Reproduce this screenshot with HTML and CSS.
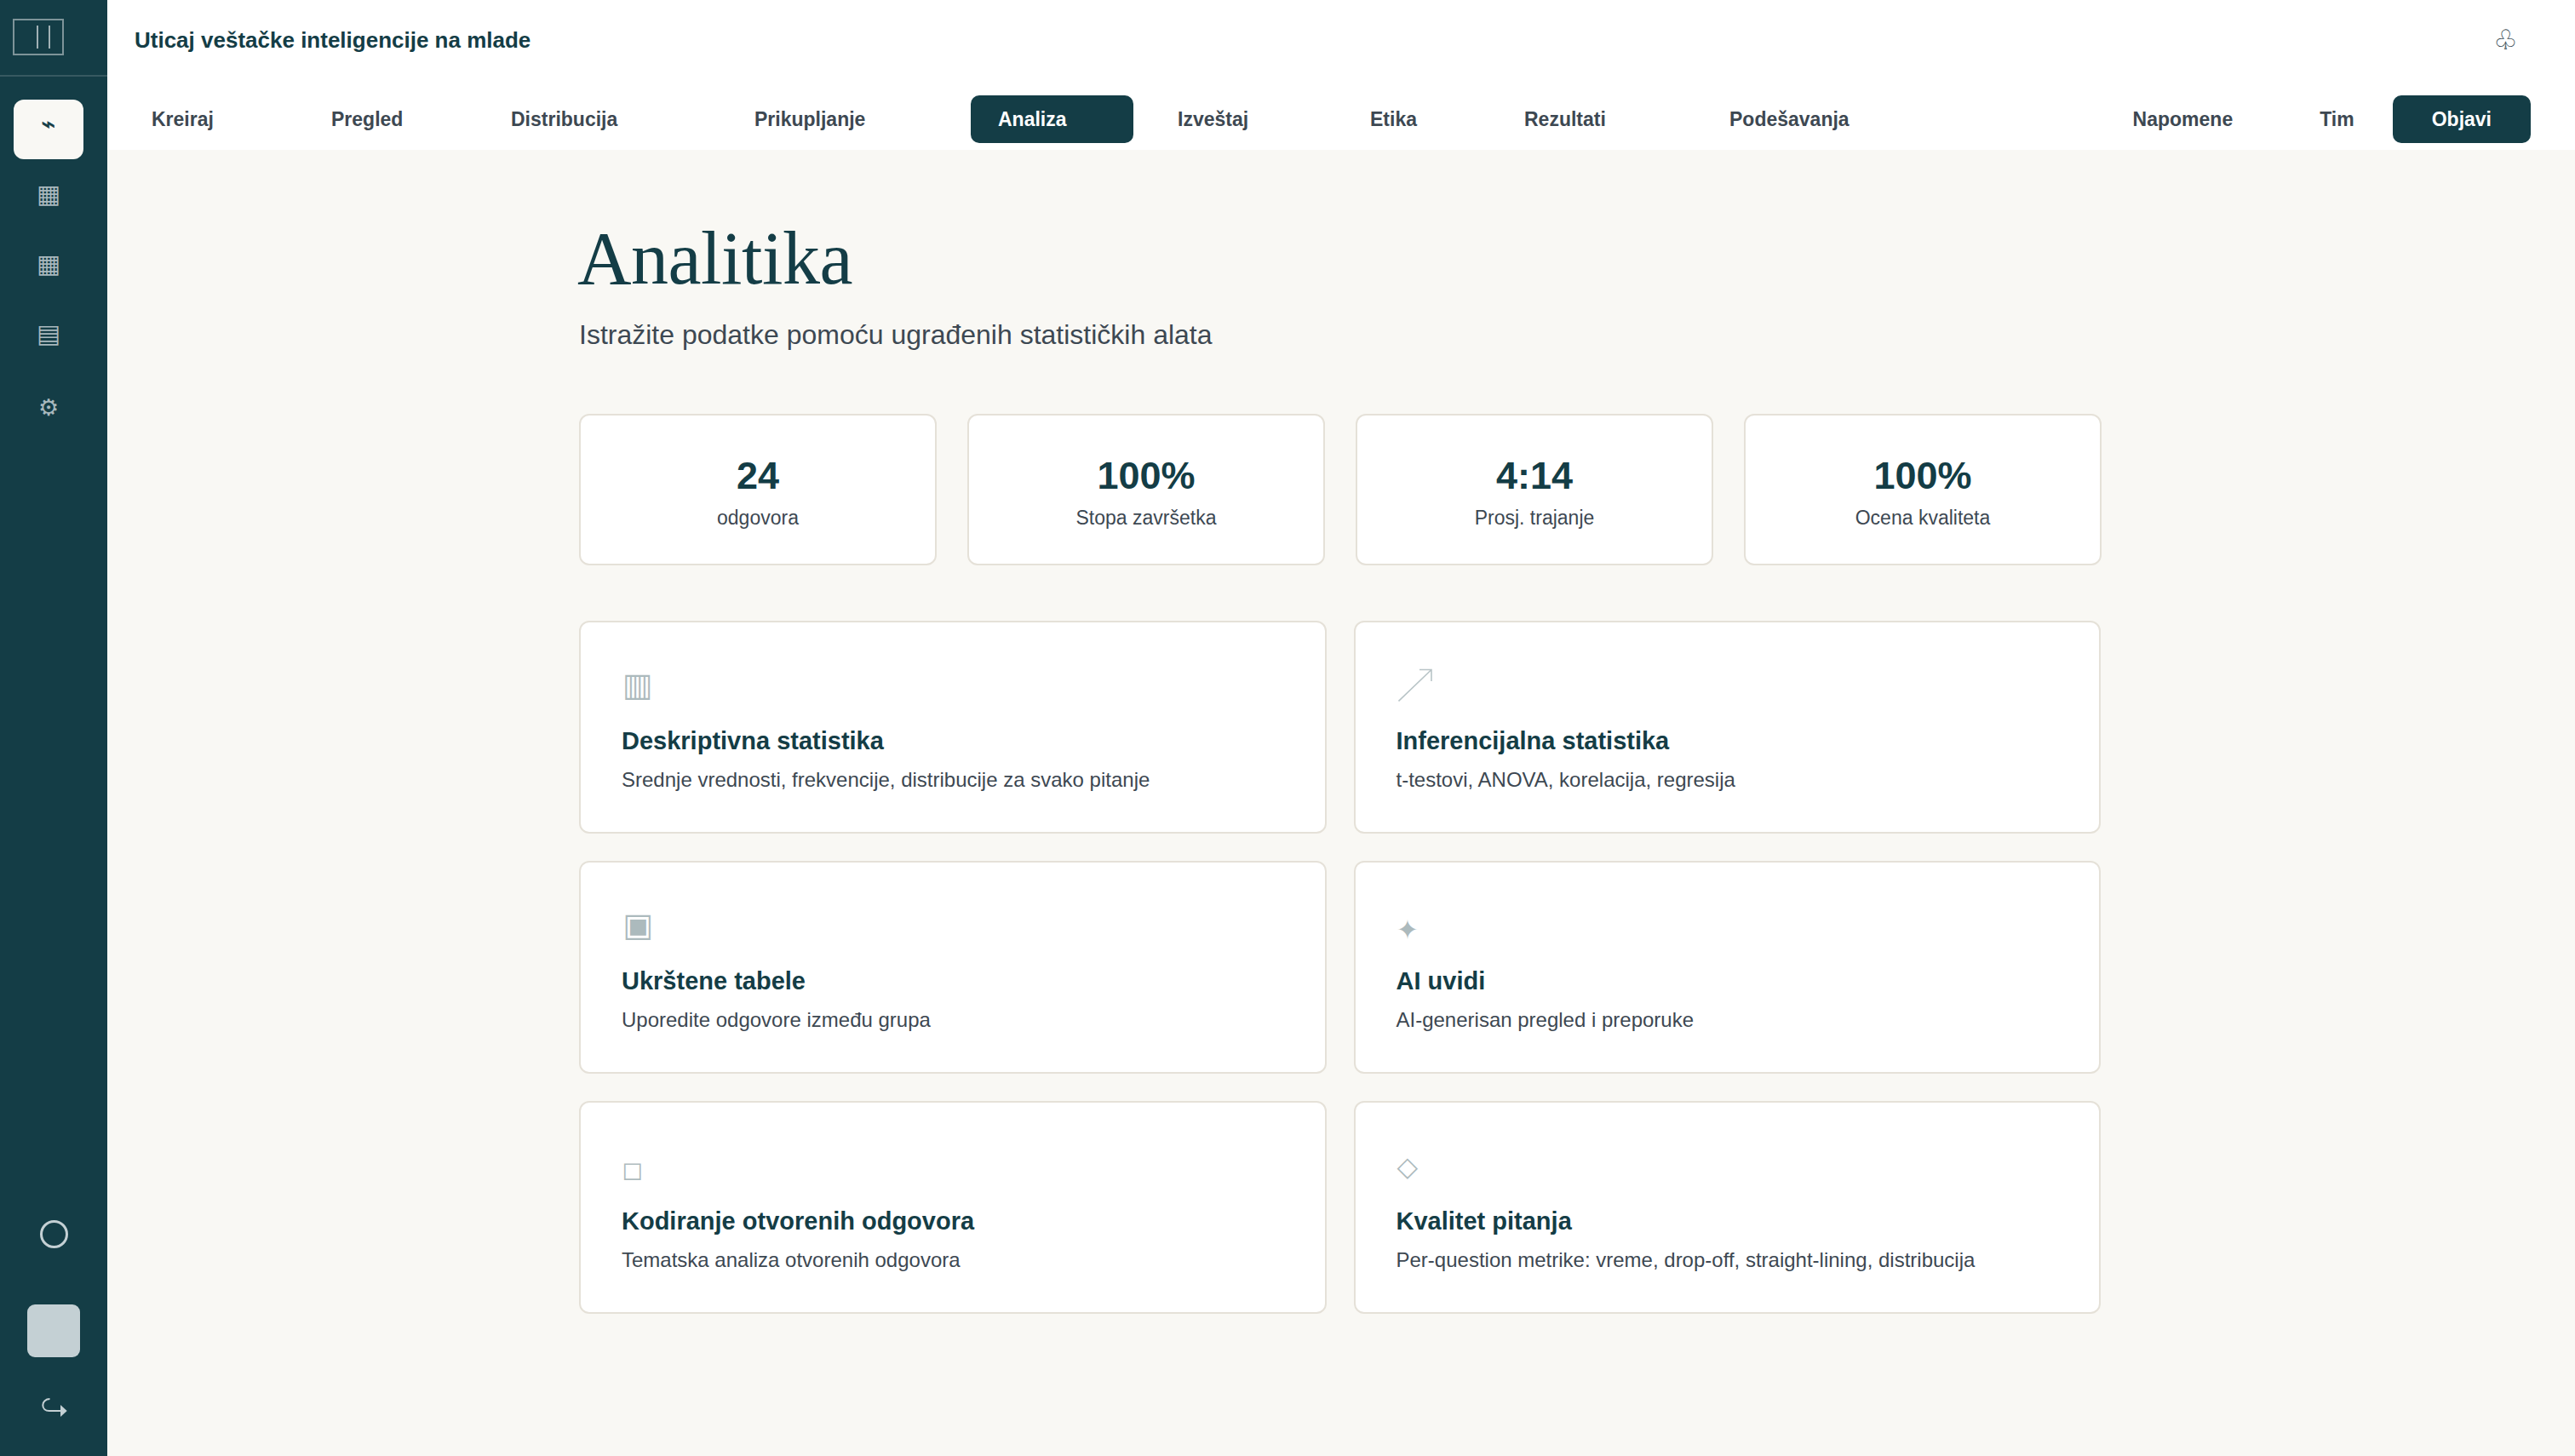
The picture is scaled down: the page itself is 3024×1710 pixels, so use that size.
FILE: index.html
```html
<!DOCTYPE html>
<html lang="sr">
<head>
<meta charset="utf-8">
<title>Analitika</title>
<link rel="stylesheet" href="styles.css">
</head>
<body>
<div class="app">
  <aside class="sidebar">
    <div class="brand"><div class="logo"><span class="logo-bar"></span><span class="logo-bar"></span></div></div>
    <nav class="side-nav">
      <div class="side-item active"><span class="glyph bolt">⌁</span></div>
      <div class="side-item"><span class="glyph">▦</span></div>
      <div class="side-item"><span class="glyph">▦</span></div>
      <div class="side-item"><span class="glyph">▤</span></div>
      <div class="side-item"><span class="glyph gear">⚙</span></div>
    </nav>
    <div class="side-bottom">
      <div class="help"></div>
      <div class="avatar"></div>
      <svg class="logout" viewBox="0 0 32 24" aria-hidden="true"><path class="logout-line" d="M10.5 1 C5.5 1 2.3 4.5 2.3 8.2 C2.3 12.5 5.5 15 9.7 15 H24"/><path class="logout-head" d="M23 8 L30.7 15 L23 22 Z"/></svg>
    </div>
  </aside>
  <div class="main">
    <header class="header">
      <div class="topbar">
        <div class="doc-title">Uticaj veštačke inteligencije na mlade</div>
        <div class="club">♧</div>
      </div>
      <div class="tabs">
        <a class="tab w-kreiraj">Kreiraj</a>
        <a class="tab w-pregled">Pregled</a>
        <a class="tab w-dist">Distribucija</a>
        <a class="tab w-dist">Prikupljanje</a>
        <a class="tab w-pregled current">Analiza</a>
        <a class="tab w-izv">Izveštaj</a>
        <a class="tab w-etika">Etika</a>
        <a class="tab w-rez">Rezultati</a>
        <a class="tab">Podešavanja</a>
        <div class="tabs-right">
          <a class="tab">Napomene</a>
          <a class="tab tim">Tim</a>
          <a class="publish">Objavi</a>
        </div>
      </div>
    </header>
    <main class="content">
      <h1 class="page-title">Analitika</h1>
      <p class="page-sub">Istražite podatke pomoću ugrađenih statističkih alata</p>
      <section class="stats">
        <div class="stat"><div class="stat-value">24</div><div class="stat-label">odgovora</div></div>
        <div class="stat"><div class="stat-value">100%</div><div class="stat-label">Stopa završetka</div></div>
        <div class="stat"><div class="stat-value">4:14</div><div class="stat-label">Prosj. trajanje</div></div>
        <div class="stat"><div class="stat-value">100%</div><div class="stat-label">Ocena kvaliteta</div></div>
      </section>
      <section class="tools">
        <div class="tool"><div class="tool-icon ic-bars">▥</div><div class="tool-title">Deskriptivna statistika</div><div class="tool-desc">Srednje vrednosti, frekvencije, distribucije za svako pitanje</div></div>
        <div class="tool"><div class="tool-icon ic-arrow"><svg class="arrow" viewBox="0 0 40 40" aria-hidden="true"><path d="M0.5 38.5 L39 1.5 M25 1.5 H39 V15"/></svg></div><div class="tool-title">Inferencijalna statistika</div><div class="tool-desc">t-testovi, ANOVA, korelacija, regresija</div></div>
        <div class="tool"><div class="tool-icon ic-bars">▣</div><div class="tool-title">Ukrštene tabele</div><div class="tool-desc">Uporedite odgovore između grupa</div></div>
        <div class="tool"><div class="tool-icon ic-star">✦</div><div class="tool-title">AI uvidi</div><div class="tool-desc">AI-generisan pregled i preporuke</div></div>
        <div class="tool"><div class="tool-icon ic-box">◻</div><div class="tool-title">Kodiranje otvorenih odgovora</div><div class="tool-desc">Tematska analiza otvorenih odgovora</div></div>
        <div class="tool"><div class="tool-icon ic-diamond">◇</div><div class="tool-title">Kvalitet pitanja</div><div class="tool-desc">Per-question metrike: vreme, drop-off, straight-lining, distribucija</div></div>
      </section>
    </main>
  </div>
</div>
</body>
</html>
```
FILE: styles.css
```css
* { box-sizing: border-box; }
html, body { margin: 0; height: 100%; }
body { font-family: "Liberation Sans", Arial, sans-serif; color: #143d46; background: #f9f8f4; }
.app { display: flex; height: 1710px; overflow: hidden; }

.sidebar { width: 126px; flex: none; background: #143d46; display: flex; flex-direction: column; align-items: stretch; }
.brand { height: 90px; padding: 22px 15px 0; border-bottom: 2px solid rgba(255,255,255,.15); }
.logo { width: 60px; height: 43px; border: 2px solid rgba(255,255,255,.45); display: flex; gap: 12px; padding: 6px 0 0 26px; }
.logo-bar { width: 2px; height: 27px; background: rgba(255,255,255,.6); }
.side-nav { display: flex; flex-direction: column; gap: 12px; padding: 27px 16px 0 16px; }
.side-item { height: 70px; width: 82px; border-radius: 12px; display: flex; align-items: center; justify-content: center; color: #a8b8bd; }
.side-item.active { background: #f9f8f4; color: #143d46; }
.glyph { font-family: "DejaVu Sans", sans-serif; font-size: 30px; line-height: 1; padding-bottom: 12px; }
.bolt { font-size: 28px; -webkit-text-stroke: .5px #143d46; }
.gear { font-size: 27px; padding-bottom: 4px; }
.side-bottom { margin-top: auto; display: flex; flex-direction: column; align-items: center; }
.help { width: 33px; height: 33px; border: 3px solid #c4d0d4; border-radius: 50%; }
.avatar { width: 62px; height: 62px; border-radius: 9px; background: #c4d0d4; margin-top: 66px; }
.logout { display: block; width: 32px; height: 24px; margin: 48px 0 44px 2px; }
.logout-line { fill: none; stroke: #c4d0d4; stroke-width: 2; }
.logout-head { fill: #c4d0d4; }

.main { flex: 1; min-width: 0; display: flex; flex-direction: column; }
.header { background: #fff; height: 176px; flex: none; }
.topbar { height: 92px; padding: 2px 67px 0 32px; display: flex; align-items: center; justify-content: space-between; }
.doc-title { font-size: 26px; font-weight: 700; color: #143d46; }
.club { font-family: "DejaVu Sans", sans-serif; font-size: 32px; line-height: 1; color: #3d4f58; }
.tabs { display: flex; align-items: flex-start; gap: 20px; padding: 20px 52px 0 20px; }
.tab { height: 56px; padding: 1px 32px 0; display: flex; align-items: center; font-size: 23px; font-weight: 700; color: #3d4852; border-radius: 10px; white-space: nowrap; }
.tab.current { background: #143d46; color: #fff; }
.w-kreiraj { width: 191px; }
.w-pregled { width: 191px; }
.w-dist { width: 266px; }
.w-izv { width: 206px; }
.w-etika { width: 161px; }
.w-rez { width: 221px; }
.tabs-right { margin-left: auto; display: flex; gap: 38px; }
.tabs-right .tim { margin-right: -25px; }
.publish { height: 56px; padding: 1px 46px 0; display: flex; align-items: center; background: #143d46; color: #fff; font-size: 23px; font-weight: 700; border-radius: 10px; }

.content { flex: 1; padding: 75px 0 0 554px; width: 2342px; }
.page-title { font-family: "Liberation Serif", Georgia, serif; font-weight: 400; font-size: 88px; letter-spacing: -.5px; line-height: 1.2; margin: 0 0 0 -2px; color: #143d46; }
.page-sub { font-size: 32px; line-height: 48px; margin: 12px 0 0; color: #3d4852; }
.stats { display: grid; grid-template-columns: repeat(4, 1fr); gap: 36px; margin-top: 69px; }
.stat { height: 178px; background: #fff; border: 2px solid #e5e1d8; border-radius: 12px; display: flex; flex-direction: column; align-items: center; padding-top: 42px; }
.stat-value { font-size: 45px; font-weight: 700; line-height: 58px; color: #143d46; }
.stat-label { font-size: 23px; line-height: 34px; color: #3d4852; margin-top: 3px; }
.tools { display: grid; grid-template-columns: 877.5px 877.5px; gap: 32px; margin-top: 65px; }
.tool { height: 250px; background: #fff; border: 2px solid #e5e1d8; border-radius: 12px; padding: 48px 48px 0; }
.tool-icon { font-family: "DejaVu Sans", sans-serif; font-size: 36px; line-height: 50px; height: 56px; color: #143d46; opacity: .35; }
.ic-bars { font-size: 38px; padding-left: 1px; }
.ic-arrow { padding: 6px 0 0 2px; }
.ic-star { font-size: 32px; line-height: 62px; }
.ic-box { font-size: 30px; line-height: 62px; }
.ic-diamond { font-size: 32px; line-height: 54px; padding-left: 1px; }
.arrow { display: block; width: 40px; height: 40px; fill: none; stroke: #143d46; stroke-width: 1.6; opacity: .85; }
.tool-title { font-size: 29px; font-weight: 700; line-height: 44px; margin-top: 13px; color: #143d46; }
.tool-desc { font-size: 24px; line-height: 38px; margin-top: 5px; color: #3d4852; }
```
